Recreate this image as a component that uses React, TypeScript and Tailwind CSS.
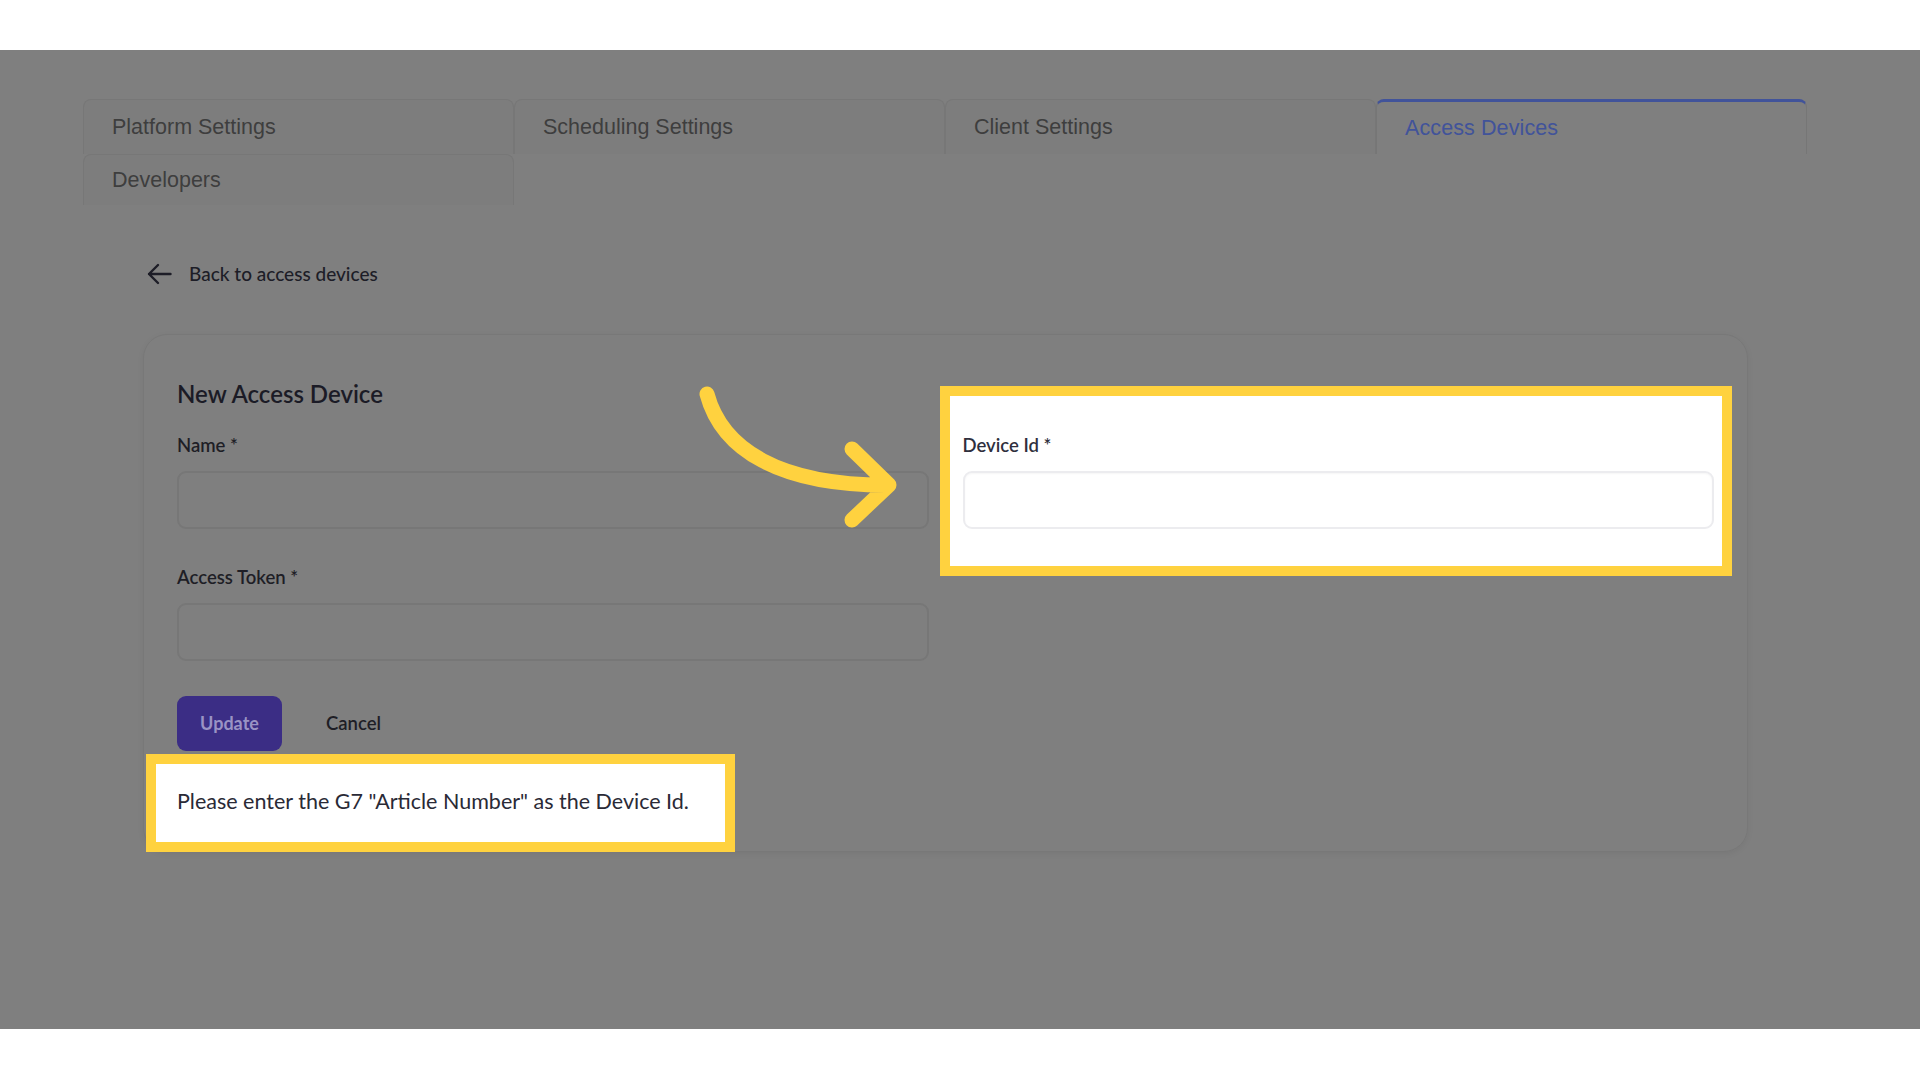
import React from "react";

const tabs = [
  { label: "Platform Settings", active: false },
  { label: "Scheduling Settings", active: false },
  { label: "Client Settings", active: false },
  { label: "Access Devices", active: true },
  { label: "Developers", active: false },
];

function Field({ label, highlight }: { label: string; highlight?: boolean }) {
  return (
    <div className="relative">
      {highlight && (
        <div className="absolute -left-[23px] -top-[47px] -right-[18px] -bottom-[47px] bg-white border-[10px] border-[#ffd23f]" />
      )}
      <div className="relative">
        <p className={`text-[18.5px] leading-6 font-semibold mb-[14px] ${highlight ? "text-[#2f2f3d]" : "text-[#1e1e26]"}`}>
          {label} *
        </p>
        <input
          className={`w-full h-[58px] rounded-[9px] px-4 outline-none ${
            highlight
              ? "bg-white border-2 border-[#ececef] shadow-[inset_0_1px_2px_rgba(0,0,0,0.04)]"
              : "bg-[#7f7f7f] border-2 border-[#777777]"
          }`}
        />
      </div>
    </div>
  );
}

export default function App() {
  return (
    <div className="w-[1920px] h-[1080px] bg-white pt-[50px] overflow-hidden">
      <div className="relative h-[979px] bg-[#7f7f7f] font-['Lato',sans-serif]">
        <div className="px-[83px] pt-[49px] pr-[113px]">
          {/* Tabs */}
          <div className="grid grid-cols-4 w-[1724px]">
            {tabs.map((t, i) => (
              <div
                key={t.label}
                className={`flex items-center px-[28px] rounded-t-[8px] border-x border-t font-['Liberation_Sans',Arial,sans-serif] text-[21.5px] ${
                  i < 4 ? "h-[55px]" : "h-[51px]"
                } ${
                  t.active
                    ? "border-x-[#767676] border-t-[3px] border-t-[#41539a] text-[#41539a] bg-[#7f7f7f] tracking-[0.1px]"
                    : "border-[#777777] text-[#3e3e3e] bg-[#7d7d7d]"
                }`}
              >
                {t.label}
              </div>
            ))}
          </div>

          <div className="px-[60px]">
            {/* Back link */}
            <div className="flex items-center gap-[17px] mt-[57px] h-6 pl-1 text-[#1d1d27]">
              <svg width="25" height="22" viewBox="0 0 25 22" fill="none" stroke="currentColor" strokeWidth="2.4" strokeLinecap="round" strokeLinejoin="round">
                <path d="M23.5 11H2M11 2 2 11l9 9" />
              </svg>
              <span className="text-[19px] font-medium">Back to access devices</span>
            </div>

            {/* Card */}
            <div className="mt-[48px] w-[1605px] rounded-[24px] border border-[#787878] shadow-[0_2px_6px_rgba(0,0,0,0.06)] px-[33px] pt-[43px] pb-[36px]">
              <h1 className="text-[24px] leading-8 font-semibold text-[#1b1b26]">New Access Device</h1>

              <div className="grid grid-cols-2 gap-x-[34px] gap-y-[36px] mt-[23px]">
                <Field label="Name" />
                <Field label="Device Id" highlight />
                <Field label="Access Token" />
              </div>

              <div className="flex items-center gap-[44px] mt-[35px]">
                <button className="w-[105px] h-[55px] rounded-[9px] bg-[#3b2d85] text-[#9a93c4] text-[18px] font-bold">
                  Update
                </button>
                <button className="text-[18.5px] font-semibold text-[#1e1e26]">Cancel</button>
              </div>

              <div className="relative mt-[36px]">
                <div className="absolute -left-[31px] -top-[33px] w-[589px] h-[98px] bg-white border-[10px] border-[#ffd23f]" />
                <p className="relative text-[21.5px] leading-7 text-[#2a2a36]">
                  Please enter the G7 "Article Number" as the Device Id.
                </p>
              </div>
            </div>
          </div>
        </div>

        {/* Annotation arrow */}
        <svg className="absolute left-0 top-0 pointer-events-none" width="1920" height="979" viewBox="0 50 1920 979" fill="none">
          <path
            d="M707 394 C722 450 780 485 886 485 M852 449 L889 485 L852 520"
            stroke="#ffd23f"
            strokeWidth="15"
            strokeLinecap="round"
            strokeLinejoin="round"
          />
        </svg>
      </div>
    </div>
  );
}
